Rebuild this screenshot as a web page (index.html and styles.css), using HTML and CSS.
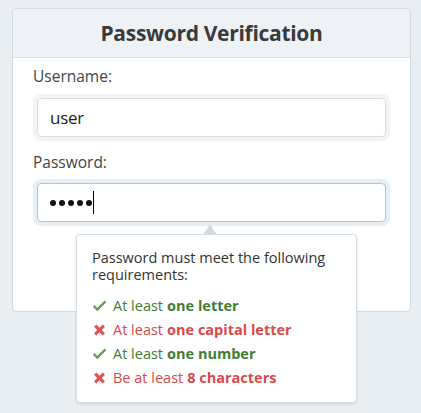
FILE: index.html
```html
<!DOCTYPE html>
<html>
<head>
<meta charset="utf-8">
<link rel="stylesheet" href="styles.css">
</head>
<body>
<div class="card">
  <div class="card-header"><h1 class="title">Password Verification</h1></div>
  <div class="card-body">
    <label class="label">Username:</label>
    <div class="input"><span class="value">user</span></div>
    <label class="label label-pw">Password:</label>
    <div class="pw-wrap">
      <div class="input input-focus"><span class="dots"><i></i><i></i><i></i><i></i><i></i></span><span class="caret"></span></div>
      <div class="tip">
        <span class="arrow"></span>
        <p class="tip-intro">Password must meet the following requirements:</p>
        <ul class="reqs">
          <li class="req ok"><svg class="ico" viewBox="0 0 14 12"><path d="M0.8 6.6 L5 10.8 L13.4 2.2 L11.8 0.8 L5 7.6 L2.4 5 Z" fill="#5aa84a"/></svg>At least <b>one letter</b></li>
          <li class="req bad"><svg class="ico" viewBox="0 0 14 14"><path d="M1.5 3.8 L3.8 1.5 L7 4.7 L10.2 1.5 L12.5 3.8 L9.3 7 L12.5 10.2 L10.2 12.5 L7 9.3 L3.8 12.5 L1.5 10.2 L4.7 7 Z" fill="#e05454"/></svg>At least <b>one capital letter</b></li>
          <li class="req ok"><svg class="ico" viewBox="0 0 14 12"><path d="M0.8 6.6 L5 10.8 L13.4 2.2 L11.8 0.8 L5 7.6 L2.4 5 Z" fill="#5aa84a"/></svg>At least <b>one number</b></li>
          <li class="req bad"><svg class="ico" viewBox="0 0 14 14"><path d="M1.5 3.8 L3.8 1.5 L7 4.7 L10.2 1.5 L12.5 3.8 L9.3 7 L12.5 10.2 L10.2 12.5 L7 9.3 L3.8 12.5 L1.5 10.2 L4.7 7 Z" fill="#e05454"/></svg>Be at least <b>8 characters</b></li>
        </ul>
      </div>
    </div>
  </div>
</div>
</body>
</html>
```
FILE: styles.css
```css
html, body { margin: 0; padding: 0; }
body {
  background: #e9eef2;
  font-family: "Open Sans", "Liberation Sans", sans-serif;
  color: #333;
  width: 421px;
  height: 413px;
  overflow: hidden;
}
.card {
  margin: 8px 0 0 12px;
  width: 397px;
  background: #fff;
  border: 1px solid #d3dae0;
  border-radius: 4px;
}
.card-header {
  height: 48px;
  background: #eef2f6;
  border-bottom: 1px solid #d9e0e5;
  border-radius: 4px 4px 0 0;
  display: flex;
  align-items: center;
  justify-content: center;
}
.title {
  margin: 0;
  font-size: 21px;
  font-weight: 700;
  color: #3a3a3a;
  letter-spacing: -0.3px;
}
.card-body {
  padding: 7px 0 89px 20px;
  display: flex;
  flex-direction: column;
}
.label {
  font-size: 15.5px;
  line-height: 22px;
  color: #444;
}
.input {
  margin: 11px 0 0 4px;
  width: 335px;
  height: 37px;
  border: 1px solid #dcdcdc;
  border-radius: 4px;
  box-shadow: 0 0 0 4px #f3f4f5;
  display: flex;
  align-items: center;
  padding-left: 12px;
  box-sizing: content-box;
  font-size: 17px;
  letter-spacing: -0.3px;
  color: #222;
}
.label-pw { margin-top: 14px; }
.pw-wrap { position: relative; }
.input-focus {
  margin-top: 10px;
  border-color: #a9c4dc;
  box-shadow: 0 0 0 4px #e6eef6;
}
.dots { display: flex; gap: 3px; }
.dots i {
  display: block;
  width: 6px;
  height: 6px;
  border-radius: 50%;
  background: #111;
}
.caret {
  display: inline-block;
  width: 1px;
  height: 23px;
  background: #000;
  margin-left: 1px;
}
.tip {
  position: absolute;
  left: 43px;
  top: 61px;
  width: 250px;
  padding: 14px 14px 12px 15px;
  background: #fff;
  border: 1px solid #d8dde2;
  border-radius: 4px;
  box-shadow: 0 1px 3px rgba(0,0,0,0.12);
  z-index: 2;
}
.arrow {
  position: absolute;
  top: -11px;
  left: 126px;
  width: 0;
  height: 0;
  border-left: 7px solid transparent;
  border-right: 7px solid transparent;
  border-bottom: 11px solid #d5d9dd;
}
.tip-intro {
  margin: 0 0 11px;
  font-size: 14.5px;
  line-height: 17px;
  color: #333;
}
.reqs { list-style: none; margin: 0; padding: 0; }
.req {
  display: flex;
  align-items: center;
  font-size: 14.5px;
  line-height: 24px;
}
.req b { font-weight: 700; margin-left: 4px; }
.ico { width: 15px; height: 14px; margin-right: 6px; }
.ok { color: #3f7d35; }
.bad { color: #d84a4a; }
```
